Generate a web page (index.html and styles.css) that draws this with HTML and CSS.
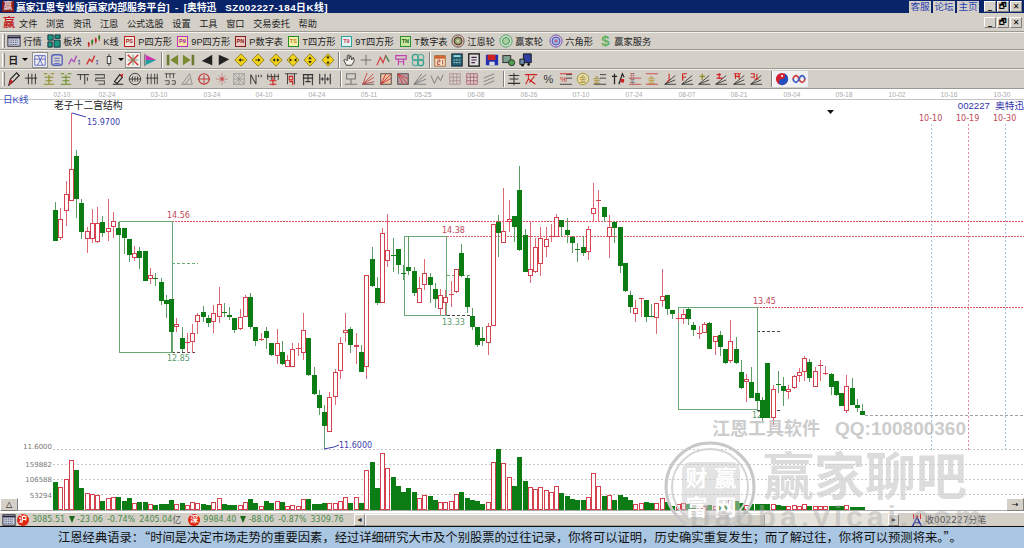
FILE: index.html
```html
<!DOCTYPE html>
<html lang="zh-CN">
<head>
    <meta charset="UTF-8">
    <title>赢家江恩专业版 - 奥特迅 日K线</title>
    <link rel="stylesheet" href="styles.css">
</head>
<body>
<svg class="defs" width="0" height="0">
    <symbol id="dia" viewBox="0 0 16 16"><path d="M8 1 15 8 8 15 1 8Z" fill="#f2d21a" stroke="#8a7a10"/></symbol>
    <symbol id="fan" viewBox="0 0 16 16"><path d="M2 14 14 2M2 14 15 6M2 14 15 11M2 14 7 1" fill="none" stroke="#c84040"/><path d="M2 14H15" stroke="#555"/></symbol>
    <symbol id="slant" viewBox="0 0 16 16"><path d="M2 14 14 4M2 14 14 9M2 14H15" fill="none" stroke="#333"/></symbol>
</svg>

<div class="titlebar">
    <span class="app-logo">赢</span>
    <span class="title-text">赢家江恩专业版[赢家内部服务平台]&nbsp;&nbsp;-&nbsp;&nbsp;[奥特迅<span class="title-code">SZ002227-184日K线]</span></span>
    <div class="title-links">
        <a>客服</a><a>论坛</a><a>主页</a>
    </div>
    <div class="win-btns">
        <button class="win-btn">_</button><button class="win-btn">🗗</button><button class="win-btn">✕</button>
    </div>
</div>

<div class="menubar">
    <span class="menu-logo">赢</span>
    <nav class="menu">
        <span>文件</span><span>浏览</span><span>资讯</span><span>江恩</span><span>公式选股</span><span>设置</span><span>工具</span><span>窗口</span><span>交易委托</span><span>帮助</span>
    </nav>
    <div class="win-btns">
        <button class="win-btn">_</button><button class="win-btn">🗗</button><button class="win-btn">✕</button>
    </div>
</div>

<div class="toolbar tb-main">
    <i class="grip"></i>
    <span class="tb-item w-hq"><svg class="ic" viewBox="0 0 16 16"><rect x="1" y="2" width="14" height="12" fill="#c8cce0" stroke="#223"/><path d="M1 4H15" stroke="#223" stroke-width="2"/><path d="M3 7H13M3 9.500H13M3 12H13" stroke="#334" stroke-dasharray="1 1"/></svg>行情</span>
    <span class="tb-item w-bk"><svg class="ic" viewBox="0 0 16 16"><path d="M1 1H7V7H1ZM9 1H15V5H9ZM1 9H6V15H1ZM8 7H15V15H8Z" fill="#1a9a80" stroke="#123"/></svg>板块</span>
    <span class="tb-item w-k"><svg class="ic" viewBox="0 0 16 16"><path d="M2 9V15M6 6V13M10 4V11M14 1V8" stroke="#c02020"/><path d="M1 10H3V13H1ZM9 5H11V9H9Z" fill="#c02020"/><path d="M5 7H7V11H5ZM13 2H15V6H13Z" fill="#1a8a1a"/></svg>K线</span>
    <span class="tb-item w-p"><b class="box-ic c-red">PS</b>P四方形</span>
    <span class="tb-item w-9p"><b class="box-ic c-mag">P9</b>9P四方形</span>
    <span class="tb-item w-pn"><b class="box-ic c-dred">PN</b>P数字表</span>
    <span class="tb-item w-p"><b class="box-ic c-grn">TS</b>T四方形</span>
    <span class="tb-item w-9t"><b class="box-ic c-teal">T9</b>9T四方形</span>
    <span class="tb-item w-pn"><b class="box-ic c-lgrn">TN</b>T数字表</span>
    <span class="tb-item w-wheel"><svg class="ic" viewBox="0 0 16 16"><circle cx="8" cy="8" r="7" fill="#e8b0a0" stroke="#555"/><circle cx="8" cy="8" r="4.500" fill="#8a9a60" stroke="#333"/><circle cx="8" cy="8" r="2" fill="#d0d0b0"/></svg>江恩轮</span>
    <span class="tb-item w-wheel2"><svg class="ic" viewBox="0 0 16 16"><circle cx="8" cy="8" r="7" fill="#c8e0c0" stroke="#4a9a6a"/><circle cx="8" cy="8" r="4" fill="#a8d0a0" stroke="#3a8a5a"/></svg>赢家轮</span>
    <span class="tb-item w-hex"><svg class="ic" viewBox="0 0 16 16"><circle cx="8" cy="8" r="7" fill="#e0b8d8" stroke="#5a5ab0"/><circle cx="8" cy="8" r="4.500" fill="#9ac0e8" stroke="#4040a0"/><circle cx="8" cy="8" r="2" fill="#c06090"/></svg>六角形</span>
    <span class="tb-item"><b class="dollar">$</b>赢家服务</span>
</div>

<div class="toolbar tb-two">
    <i class="grip"></i>
    <span class="day-pick">日</span><span class="caret"></span>
    <span class="slot active first"><svg class="ic" viewBox="0 0 16 16"><path d="M2 3H14V14H2ZM2 7H14M6 3 11 14M11 3 5 14" stroke="#5060c0"/></svg></span>
    <span class="slot"><svg class="ic" viewBox="0 0 16 16"><rect x="2" y="2" width="12" height="12" rx="3" stroke="#5060c0" stroke-width="1.500"/><path d="M5 6H11M5 9H11M5 12H11" stroke="#5060c0"/></svg></span>
    <span class="slot"><svg class="ic" viewBox="0 0 16 16"><path d="M2 13 5 7 8 10 11 3" stroke="#b050c0" stroke-width="1.500"/><path d="M13 9H15M13 12H15" stroke="#6060a0" stroke-width="2"/></svg></span>
    <span class="slot"><svg class="ic" viewBox="0 0 16 16"><path d="M2 13 5 7 8 10 11 3" stroke="#d03030" stroke-width="1.500"/><path d="M13 9H15M13 12H15" stroke="#6060a0" stroke-width="2"/></svg></span>
    <span class="slot"><svg class="ic" viewBox="0 0 16 16"><path d="M8 1V15" stroke="#333"/><rect x="6" y="4" width="4" height="8" fill="#eee" stroke="#333"/></svg></span>
    <span class="caret solo"></span>
    <span class="slot active"><svg class="ic" viewBox="0 0 16 16"><path d="M2 2 14 14M14 2 2 14" stroke="#d04040" stroke-width="2"/><path d="M8 2V14M2 8H14" stroke="#609060"/></svg></span>
    <span class="slot"><svg class="ic" viewBox="0 0 16 16"><path d="M2 1V15" stroke="#555"/><path d="M3 2 15 8H3Z" fill="#d030b0"/><path d="M3 8H15L3 14Z" fill="#20a0a0"/></svg></span>
    <i class="sep sep-a"></i>
    <span class="slot"><svg class="ic" viewBox="0 0 16 16"><path d="M2 2H5V14H2Z" fill="#6a7a30"/><path d="M15 2V14L6 8Z" fill="#7a8a30"/></svg></span>
    <span class="slot"><svg class="ic" viewBox="0 0 16 16"><path d="M11 2H14V14H11Z" fill="#6a7a30"/><path d="M1 2V14L10 8Z" fill="#7a8a30"/></svg></span>
    <span class="slot"><svg class="ic" viewBox="0 0 16 16"><path d="M14 2V14L2 9Z" fill="#222"/></svg></span>
    <span class="slot"><svg class="ic" viewBox="0 0 16 16"><path d="M2 2V14L14 7Z" fill="#222"/></svg></span>
    <span class="slot"><svg class="ic" viewBox="0 0 16 16"><use href="#dia"/><path d="M5 8 8 6V10Z" fill="#222"/><path d="M8 8H11" stroke="#222"/></svg></span>
    <span class="slot"><svg class="ic" viewBox="0 0 16 16"><use href="#dia"/><path d="M11 8 8 6V10Z" fill="#222"/><path d="M5 8H8" stroke="#222"/></svg></span>
    <span class="slot"><svg class="ic" viewBox="0 0 16 16"><use href="#dia"/><path d="M4 8 7 6V10ZM12 8 9 6V10Z" fill="#222"/></svg></span>
    <span class="slot"><svg class="ic" viewBox="0 0 16 16"><use href="#dia"/><path d="M7 8 4 6V10ZM9 8 12 6V10Z" fill="#222"/></svg></span>
    <span class="slot"><svg class="ic" viewBox="0 0 16 16"><use href="#dia"/><path d="M8 4 6 7H10ZM8 12 6 9H10Z" fill="#222"/></svg></span>
    <span class="slot"><svg class="ic" viewBox="0 0 16 16"><use href="#dia"/><path d="M8 7 6 4H10ZM8 9 6 12H10Z" fill="#222"/></svg></span>
    <i class="sep sep-b"></i>
    <span class="slot"><svg class="ic" viewBox="0 0 16 16"><path d="M5 14 2 8 4 7 6 9V3L8 2V7L10 3 11 8 13 5 14 9 11 14Z" fill="#f4f0e8" stroke="#333"/></svg></span>
    <span class="slot"><svg class="ic" viewBox="0 0 16 16"><path d="M8 2V14M2 8H14" stroke="#666"/></svg></span>
    <span class="slot"><svg class="ic" viewBox="0 0 16 16"><path d="M1 14 5 5 8 11 11 3 15 10" stroke="#d04040" stroke-width="1.400"/><path d="M11 3 15 10" stroke="#30a060" stroke-width="1.400"/></svg></span>
    <span class="slot"><svg class="ic" viewBox="0 0 16 16"><path d="M2 3H14V7H2ZM5 7V14M11 7V14M5 10H11" stroke="#c040b0" stroke-width="1.300"/></svg></span>
    <span class="slot"><svg class="ic" viewBox="0 0 16 16"><circle cx="5" cy="5" r="3.500" stroke="#30a090" stroke-width="1.400"/><circle cx="11" cy="5" r="3.500" stroke="#60b0a0" stroke-width="1.400"/><circle cx="5" cy="11" r="3.500" stroke="#60b0a0" stroke-width="1.400"/><circle cx="11" cy="11" r="3.500" stroke="#30a090" stroke-width="1.400"/></svg></span>
    <i class="sep sep-c"></i>
    <span class="slot"><svg class="ic" viewBox="0 0 16 16"><rect x="2" y="3" width="12" height="12" fill="#f8e0c0" stroke="#a06030"/><path d="M2 5H14" stroke="#d06030" stroke-width="3"/><path d="M5 8H8V10H5V13H8M11 8V13" stroke="#a04040"/></svg></span>
    <span class="slot"><svg class="ic" viewBox="0 0 16 16"><rect x="2" y="1" width="12" height="14" fill="#206070" stroke="#123"/><path d="M4 3.500H12" stroke="#a0e0e0" stroke-width="2"/><path d="M4 8H12M4 11H12" stroke="#d0e0e0" stroke-dasharray="2 1"/></svg></span>
    <span class="slot"><svg class="ic" viewBox="0 0 16 16"><rect x="2" y="1" width="12" height="14" fill="#ddd" stroke="#222" stroke-width="1.600"/><path d="M5 5H11M5 8H11M5 11H9" stroke="#402040" stroke-width="1.300"/></svg></span>
    <span class="slot"><svg class="ic" viewBox="0 0 16 16"><rect x="1" y="2" width="14" height="12" fill="#2030b0"/><rect x="3" y="2" width="9" height="6" fill="#d02020"/><rect x="5" y="10" width="6" height="4" fill="#ddd"/></svg></span>
    <span class="slot"><svg class="ic" viewBox="0 0 16 16"><rect x="1" y="3" width="9" height="8" fill="#80a090" stroke="#222"/><circle cx="11" cy="11" r="3.500" fill="#50a050" stroke="#222"/></svg></span>
    <span class="slot"><svg class="ic" viewBox="0 0 16 16"><path d="M5 1H14V11H5Z" fill="#3040a0" stroke="#111"/><path d="M1 7H6V13H1Z" fill="#7090b0" stroke="#111"/><circle cx="4" cy="14" r="1.500" fill="#111"/><circle cx="11" cy="13" r="1.500" fill="#111"/></svg></span>
</div>

<div class="toolbar tb-three">
    <i class="grip"></i>
    <span class="slot"><svg class="ic" viewBox="0 0 16 16"><path d="M2 15 4 8 11 1 14 4 7 11Z" stroke="#222" stroke-width="1.300"/><path d="M2 15 4 8 7 11Z" fill="#d02020"/></svg></span>
    <span class="slot"><svg class="ic" viewBox="0 0 16 16"><path d="M5 2V14M9 2V14M13 2V14M1 7H15" stroke="#222"/></svg></span>
    <span class="slot"><svg class="ic" viewBox="0 0 16 16"><path d="M2 2H6M10 2H14M3 6H13M8 3V14M4 10H12M2 14H14" stroke="#8a8a20" stroke-width="1.200"/></svg></span>
    <span class="slot"><svg class="ic" viewBox="0 0 16 16"><path d="M2 2H6M10 2H14M3 6H13M8 3V14M4 10H12M2 14H14" stroke="#6a8a20" stroke-width="1.200"/></svg></span>
    <span class="slot"><svg class="ic" viewBox="0 0 16 16"><path d="M1 3H15M5 3V9M10 3V14M13 6V10" stroke="#222"/></svg></span>
    <span class="slot"><svg class="ic" viewBox="0 0 16 16"><path d="M2 3H13V7H3M3 7V10H13V14H6" stroke="#555" stroke-width="1.200"/></svg></span>
    <span class="slot"><svg class="ic" viewBox="0 0 16 16"><path d="M2 14H14M4 11 10 3 13 6 7 13Z" stroke="#222" stroke-width="1.300"/><path d="M10 3 13 6 14 2Z" fill="#d02020"/></svg></span>
    <span class="slot"><svg class="ic" viewBox="0 0 16 16"><circle cx="8" cy="8" r="6.500" stroke="#333"/><path d="M1 8H15M5 5V11M8 5V11M11 5V11" stroke="#333"/></svg></span>
    <span class="slot"><svg class="ic" viewBox="0 0 16 16"><path d="M3 2V14M7 2V14M11 2V14M14 2V14M1 7H15" stroke="#333"/></svg></span>
    <span class="slot"><svg class="ic" viewBox="0 0 16 16"><path d="M2 2H14M4 2V7M8 2V7M12 2V7M2 10H7V14H3M10 10H14V14H10" stroke="#444"/></svg></span>
    <span class="slot"><svg class="ic" viewBox="0 0 16 16"><path d="M2 14 11 2 14 14ZM6 14 11 7" stroke="#888"/></svg></span>
    <span class="slot"><svg class="ic" viewBox="0 0 16 16"><circle cx="8" cy="8" r="6" stroke="#c03030" stroke-width="1.300"/><path d="M1 8H15M8 3V14" stroke="#c03030"/></svg></span>
    <span class="slot"><svg class="ic" viewBox="0 0 16 16"><path d="M1 8H15M8 1V15M4 4 12 12M12 4 4 12" stroke="#c08080"/><circle cx="8" cy="8" r="2" fill="#d05050"/></svg></span>
    <span class="slot"><svg class="ic" viewBox="0 0 16 16"><rect x="2" y="2" width="12" height="12" stroke="#999"/><path d="M2 2 14 14M14 2 2 14M8 2V14M2 8H14" stroke="#999"/></svg></span>
    <span class="slot"><svg class="ic" viewBox="0 0 16 16"><path d="M2 14V3L8 14V3M11 3V6M14 3V6" stroke="#444" stroke-width="1.200"/></svg></span>
    <span class="slot"><svg class="ic" viewBox="0 0 16 16"><path d="M2 2V9M6 2V9M10 2V9M14 2V9M1 5H15" stroke="#333"/><path d="M8 5V15M4 10H12M4 14H12" stroke="#d02020" stroke-width="1.300"/></svg></span>
    <span class="slot"><svg class="ic" viewBox="0 0 16 16"><path d="M1 2H15M4 2V14M12 2V14" stroke="#333"/><path d="M6 5H10V9H6ZM6 11H10V15" stroke="#d02020" stroke-width="1.300"/></svg></span>
    <span class="slot"><svg class="ic" viewBox="0 0 16 16"><path d="M2 3H14M2 7H14M3 3V15M8 3V11M13 3V15M5 11H11" stroke="#333" stroke-width="1.200"/></svg></span>
    <span class="slot"><svg class="ic" viewBox="0 0 16 16"><path d="M2 2V14M14 2V14M8 2V14M3 8H7M9 8H13" stroke="#333" stroke-width="1.200"/><path d="M5 6V10M11 6V10" stroke="#333"/></svg></span>
    <i class="sep sep-d"></i>
    <span class="slot"><svg class="ic" viewBox="0 0 16 16"><path d="M3 2H13V8H3ZM8 8V14M1 14H15" stroke="#777" stroke-width="1.300"/></svg></span>
    <span class="slot"><svg class="ic" viewBox="0 0 16 16"><use href="#fan"/></svg></span>
    <span class="slot"><svg class="ic" viewBox="0 0 16 16"><rect x="2" y="2" width="12" height="12" fill="#eec0a0" stroke="#444"/><path d="M2 14 14 2M2 14 14 7M2 14 8 2" stroke="#c03030"/></svg></span>
    <span class="slot"><svg class="ic" viewBox="0 0 16 16"><rect x="2" y="2" width="12" height="12" fill="#b89aa0" stroke="#444"/><path d="M2 2 14 14M2 2 14 8M2 2 8 14" stroke="#d04040"/></svg></span>
    <span class="slot"><svg class="ic" viewBox="0 0 16 16"><path d="M1 14 15 3M1 14 15 8M1 14 10 2M1 14H15" stroke="#777"/></svg></span>
    <span class="slot"><svg class="ic" viewBox="0 0 16 16"><path d="M1 4 5 13 9 5 12 10 15 3" stroke="#777"/></svg></span>
    <span class="slot"><svg class="ic" viewBox="0 0 16 16"><path d="M2 2H14V14H2ZM2 6H14M2 10H14M6 2V14M10 2V14" stroke="#b09090"/></svg></span>
    <span class="slot"><svg class="ic" viewBox="0 0 16 16"><path d="M2 2H14V14H2ZM2 6H14M2 10H14M6 2V14M10 2V14" stroke="#b06070"/></svg></span>
    <span class="slot"><svg class="ic" viewBox="0 0 16 16"><path d="M2 7 14 2M2 11 14 6M2 15 14 10" stroke="#777"/></svg></span>
    <i class="sep sep-e"></i>
    <span class="slot"><svg class="ic" viewBox="0 0 16 16"><path d="M8 1V15M2 4H14M3 8H13M1 13H15" stroke="#333" stroke-width="1.200"/></svg></span>
    <span class="slot"><svg class="ic" viewBox="0 0 16 16"><path d="M1 3H15M5 3V8L2 14M5 8 13 14M12 5 6 12" stroke="#d02020" stroke-width="1.200"/></svg></span>
    <span class="slot pct">%</span>
    <span class="slot"><svg class="ic" viewBox="0 0 16 16"><path d="M8 3H15M8 7H15M1 14H15" stroke="#333"/><text x="1" y="11" class="ic-txt" fill="#d02020">%</text><path d="M1 2H15" stroke="#d02020"/></svg></span>
    <span class="slot"><svg class="ic" viewBox="0 0 16 16"><circle cx="8" cy="8" r="6.500" fill="#ede2b0" stroke="#9a9030"/><text x="3.500" y="11" class="ic-txt" fill="#9a8020">金</text></svg></span>
    <span class="slot"><svg class="ic" viewBox="0 0 16 16"><path d="M8 3H15M8 7H15M1 14H15" stroke="#333"/><text x="0" y="12" class="ic-txt" fill="#9a8020">金</text></svg></span>
    <span class="slot"><svg class="ic" viewBox="0 0 16 16"><path d="M4 2V14M1 5H7M9 14 13 2 15 6" stroke="#222" stroke-width="1.400"/><path d="M11 8H15V12H11Z" fill="#d02020"/></svg></span>
    <span class="slot"><svg class="ic" viewBox="0 0 16 16"><path d="M1 7H15M1 14H15" stroke="#d04040"/><text x="2" y="6.500" class="ic-txt sm" fill="#a04040">开</text><text x="2" y="13.500" class="ic-txt sm" fill="#555">平</text></svg></span>
    <span class="slot"><svg class="ic" viewBox="0 0 16 16"><path d="M1 2H15M1 14H15" stroke="#d04040"/><text x="3" y="12" class="ic-txt" fill="#b09020">金</text></svg></span>
    <span class="slot"><svg class="ic" viewBox="0 0 16 16"><use href="#slant"/><path d="M7 2V9L4 12" stroke="#d02020" stroke-width="1.200"/></svg></span>
    <span class="slot"><svg class="ic" viewBox="0 0 16 16"><use href="#slant"/><path d="M3 2H8M3 2V10M3 6H7" stroke="#d02020" stroke-width="1.300"/></svg></span>
    <span class="slot"><svg class="ic" viewBox="0 0 16 16"><use href="#slant"/><path d="M6 2V9M3 5H9" stroke="#8a8a20" stroke-width="1.300"/></svg></span>
    <span class="slot"><svg class="ic" viewBox="0 0 16 16"><use href="#slant"/><path d="M3 3H8M6 1V8M3 7H10" stroke="#d02020" stroke-width="1.200"/></svg></span>
    <span class="slot"><svg class="ic" viewBox="0 0 16 16"><use href="#slant"/><path d="M2 2H10M4 2V8M8 2V8M3 5H9" stroke="#d02020" stroke-width="1.200"/></svg></span>
    <span class="slot"><svg class="ic" viewBox="0 0 16 16"><use href="#slant"/><path d="M2 2H6V6H2M9 2V8M6 8H11" stroke="#d02020" stroke-width="1.200"/></svg></span>
    <i class="sep sep-f"></i>
    <span class="slot lit"><svg class="ic" viewBox="0 0 16 16"><circle cx="8" cy="8" r="7" fill="#d02030"/><path d="M8 1A7 7 0 0 1 8 15 3.500 3.500 0 0 1 8 8 3.500 3.500 0 0 0 8 1Z" fill="#2050c0"/><circle cx="8" cy="4.500" r="1.200" fill="#fff"/></svg></span>
    <span class="slot lit"><svg class="ic" viewBox="0 0 16 16"><path d="M1 8C3 3 6 3 8 8S13 13 15 8" stroke="#d04040" stroke-width="2"/><path d="M1 8C3 13 6 13 8 8S13 3 15 8" stroke="#4060c0" stroke-width="2"/></svg></span>
</div>

<main class="chart">
    <svg id="chart-svg" class="chart-svg" viewBox="0 89 1024 424">
        <g id="axis"></g>
        <g id="levels"></g>
        <g id="candles"></g>
        <g id="volumes"></g>
        <g id="labels"></g>
    </svg>
    <span class="chart-name">日K线</span>
    <span class="chart-title">老子十二宫结构</span>
    <span class="chart-code">002227&nbsp;&nbsp;奥特迅</span>
    <button class="corner-btn left">△</button>
    <button class="corner-btn right">→</button>
</main>

<footer class="statusbar">
    <div class="index-box">
        <svg class="ic calc" viewBox="0 0 16 16"><rect x="1" y="2" width="14" height="12" fill="#c8cce0" stroke="#223"/><path d="M1 4H15" stroke="#223" stroke-width="2"/><path d="M3 7H13M3 9.500H13M3 12H13" stroke="#334" stroke-dasharray="1 1"/></svg>
        <b class="stamp">沪</b>
        <span>3085.51</span><i class="down"></i><span class="tight">-23.06</span><span>-0.74%</span><span>2405.04</span><em class="unit">亿</em>
        <b class="stamp">深</b>
        <span>9984.40</span><i class="down"></i><span class="tight">-88.06</span><span>-0.87%</span><span>3309.76</span>
    </div>
    <div class="scroll">
        <span class="scroll-btn">◂</span>
        <span class="scroll-thumb"></span>
        <span class="scroll-track"></span>
        <span class="scroll-btn">▸</span>
    </div>
    <div class="tick-box">
        <svg class="ic tower" viewBox="0 0 16 16"><path d="M8 5 3 15M8 5 13 15M5 11H11" stroke="#2030a0" stroke-width="1.500"/><circle cx="8" cy="4" r="1.500" fill="#d02020"/><path d="M4 1V7M12 1V7" stroke="#d02020"/></svg>
        <span>收002227分笔</span>
    </div>
</footer>

<div class="quote">江恩经典语录：“时间是决定市场走势的重要因素，经过详细研究大市及个别股票的过往记录，你将可以证明，历史确实重复发生；而了解过往，你将可以预测将来。”。</div>

<div class="watermark">
    <svg class="wm-ring" viewBox="0 0 92 92">
        <circle cx="46" cy="46" r="44" fill="none" stroke="#c8c8c8" stroke-width="3"/>
        <circle cx="46" cy="46" r="38" fill="none" stroke="#d4d4d4" stroke-width="2"/>
    </svg>
    <div class="wm-seal"><span>财</span><span>赢</span><span>富</span><span>网</span></div>
    <div class="wm-line"><span>江恩工具软件</span><span class="wm-qq">QQ:100800360</span></div>
    <div class="wm-big">赢家聊吧</div>
    <div class="wm-url">jiaoba.yicai.com</div>
</div>

<script src="chart.js"></script>
</body>
</html>
```

FILE: styles.css
```css
* {
    margin: 0;
    padding: 0;
    box-sizing: border-box;
}

html, body {
    width: 1024px;
    height: 548px;
    overflow: hidden;
}

body {
    position: relative;
    display: flex;
    flex-direction: column;
    background: #d4d0c8;
    color: #222;
    font-family: "Liberation Sans", "Noto Sans CJK SC", sans-serif;
    font-size: 9.2px;
}

.defs {
    position: absolute;
}

.ic {
    width: 14px;
    height: 14px;
    fill: none;
    flex: none;
}

.ic-txt {
    font-size: 9px;
    stroke: none;
}

.ic-txt.sm {
    font-size: 6px;
}

/* title bar */
.titlebar {
    height: 14px;
    flex: none;
    display: flex;
    align-items: center;
    background: #0a246a;
    color: #fff;
    border-bottom: 1px solid #d4d0c8;
}

.app-logo {
    width: 12px;
    height: 11px;
    margin: 0 2px 0 2px;
    background: #8a1c1c;
    color: #fff;
    font-size: 9px;
    line-height: 11px;
    text-align: center;
}

.title-text {
    font-size: 9.8px;
    font-weight: 700;
    white-space: nowrap;
}

.title-code {
    margin-left: 9px;
    letter-spacing: 0.500px;
}

.title-links {
    display: flex;
    gap: 2px;
    margin-left: auto;
    margin-right: 5px;
}

.title-links a {
    width: 22px;
    height: 12px;
    background: #d4d0c8;
    color: #2a3fb0;
    font-size: 9.6px;
    line-height: 12px;
    text-align: center;
}

.win-btns {
    display: flex;
    gap: 1px;
    margin-right: 2px;
}

.win-btn {
    width: 12px;
    height: 11px;
    border: 1px solid #808080;
    border-top-color: #fff;
    border-left-color: #fff;
    background: #d4d0c8;
    color: #000;
    font-family: "DejaVu Sans", sans-serif;
    font-size: 8px;
    font-weight: 700;
    line-height: 8px;
}

/* menu */
.menubar {
    height: 18px;
    flex: none;
    display: flex;
    align-items: center;
    border-bottom: 1px solid #9a9a94;
}

.menu-logo {
    width: 12px;
    margin: 0 4px 0 3px;
    color: #c02020;
    font-size: 12px;
    font-weight: 700;
    line-height: 14px;
}

.menu {
    display: flex;
    gap: 8.600px;
    font-size: 9.2px;
}

.menubar .win-btns {
    margin-left: auto;
}

/* toolbars */
.toolbar {
    flex: none;
    display: flex;
    align-items: center;
    border-top: 1px solid #f4f2ec;
    border-bottom: 1px solid #9a9a94;
    white-space: nowrap;
}

.tb-main {
    height: 18px;
}

.tb-two {
    height: 19px;
}

.tb-three {
    height: 20px;
}

.grip {
    width: 3px;
    height: 14px;
    margin-left: 2px;
    margin-right: 0.350px;
    border-left: 1px solid #fff;
    border-right: 1px solid #808080;
}

.tb-item {
    display: flex;
    align-items: center;
    gap: 2px;
    margin-right: 6px;
}

.w-hq { width: 34px; margin-left: 2px; }
.w-bk { width: 34px; }
.w-k { width: 29px; }
.w-p { width: 47px; }
.w-9p { width: 52px; }
.w-pn { width: 47px; }
.w-9t { width: 53px; }
.w-wheel { width: 42px; }
.w-wheel2 { width: 44px; }
.w-hex { width: 43px; }

.box-ic {
    width: 11px;
    height: 11px;
    flex: none;
    margin: 0 1.500px;
    border: 1px solid;
    font-size: 5.500px;
    line-height: 9px;
    text-align: center;
    background: #f0e8e0;
}

.c-red { border-color: #c02020; color: #a01818; }
.c-mag { border-color: #c030c0; color: #a020a0; background: #f4e4a0; }
.c-dred { border-color: #802020; color: #802020; background: #f0c8c0; }
.c-grn { border-color: #209020; color: #c08020; background: #f4f0b0; }
.c-teal { border-color: #30a0a0; color: #d04060; background: #e0f4f0; }
.c-lgrn { border-color: #309030; color: #206020; background: #c8e8a0; }

.dollar {
    width: 14px;
    color: #60b060;
    font-size: 15px;
    line-height: 14px;
    text-align: center;
}

.day-pick {
    width: 16px;
    font-size: 10px;
    font-weight: 700;
    text-align: center;
}

.caret {
    width: 0;
    height: 0;
    margin: 0 3.650px 0 1px;
    border: 3px solid transparent;
    border-top: 3px solid #000;
    border-bottom: 0;
}

.caret.solo {
    margin: 0 0.850px 0 0;
}

.slot {
    width: 17.300px;
    height: 16px;
    flex: none;
    display: flex;
    align-items: center;
    justify-content: center;
}

.slot.first {
    width: 16px;
}

.slot.active {
    width: 16px;
    border: 1px solid #909090;
    background: #f2f0ec;
}

.slot.active.first {
    margin-right: 0.350px;
}

.slot.active:not(.first) {
    margin: 0 0.650px;
}

.slot.lit {
    background: #eef0f4;
}

.pct {
    font-size: 11px;
    color: #333;
}

.sep {
    height: 16px;
    flex: none;
    border-right: 1px solid #fff;
    box-shadow: inset -1px 0 0 #808080;
}

.sep-a { width: 4.350px; }
.sep-b { width: 4px; }
.sep-c { width: 4.500px; }
.sep-d { width: 8.300px; }
.sep-e { width: 7.300px; }
.sep-f { width: 8.500px; }

/* chart */
.chart {
    position: relative;
    height: 424px;
    flex: none;
    background: #fff;
    overflow: hidden;
}

.chart-svg {
    display: block;
    width: 1024px;
    height: 424px;
}

.chart-svg text {
    font-family: "DejaVu Sans", sans-serif;
    font-size: 8px;
}

.chart-svg .date {
    fill: #aaa;
    font-family: "Liberation Sans", sans-serif;
    font-size: 6.600px;
    text-anchor: middle;
}

.chart-svg .hi {
    fill: #c04858;
}

.chart-svg .lo {
    fill: #5a9a70;
}

.chart-svg .peak {
    fill: #3c3cb0;
}

.chart-svg .scale {
    fill: #777;
    font-size: 7px;
    text-anchor: end;
}

.chart-name,
.chart-title,
.chart-code {
    position: absolute;
    white-space: nowrap;
}

.chart-name {
    left: 3px;
    top: 3px;
    color: #3a4fc0;
    font-size: 9.600px;
}

.chart-title {
    left: 54px;
    top: 9px;
    color: #222;
    font-size: 9.800px;
}

.chart-code {
    right: 0;
    top: 9px;
    color: #3333aa;
    font-size: 9.600px;
}

.corner-btn {
    position: absolute;
    bottom: 2px;
    width: 18px;
    height: 13px;
    border: 1px solid #808080;
    border-top-color: #fff;
    border-left-color: #fff;
    background: #d4d0c8;
    font-family: "DejaVu Sans", sans-serif;
    font-size: 8px;
    line-height: 9px;
}

.corner-btn.left {
    left: 0;
}

.corner-btn.right {
    right: 0;
}

/* status */
.statusbar {
    height: 14px;
    flex: none;
    display: flex;
    align-items: center;
    border-bottom: 1px solid #111;
    font-family: "DejaVu Sans", "Noto Sans CJK SC", sans-serif;
    font-size: 8px;
}

.index-box {
    width: 353px;
    flex: none;
    display: flex;
    align-items: center;
    gap: 4px;
    padding-left: 2px;
    overflow: hidden;
    color: #4a8a4a;
    white-space: nowrap;
}

.index-box .calc {
    margin-right: -3px;
}

.stamp {
    width: 12px;
    height: 12px;
    flex: none;
    margin-right: -1px;
    border-radius: 50%;
    background: #e02810;
    color: #fff;
    font-size: 8px;
    line-height: 12px;
    text-align: center;
}

.down {
    width: 0;
    height: 0;
    margin-right: -2px;
    border: 3.500px solid transparent;
    border-top: 7px solid #1a6a1a;
    border-bottom: 0;
}

.unit {
    margin-left: -4px;
    margin-right: 3px;
    color: #555;
    font-size: 9px;
    font-style: normal;
}

.scroll {
    width: 545px;
    height: 13px;
    flex: none;
    margin-left: 1px;
    display: flex;
    align-items: center;
    background: #e6e3dc;
}

.scroll-btn {
    width: 11px;
    height: 12px;
    flex: none;
    border: 1px solid #808080;
    border-top-color: #fff;
    border-left-color: #fff;
    background: #d4d0c8;
    font-size: 8px;
    line-height: 10px;
    text-align: center;
}

.scroll-thumb {
    width: 400px;
    height: 12px;
    flex: none;
    border: 1px solid #a0a0a0;
    border-top-color: #fff;
    border-left-color: #fff;
    background: #d4d0c8;
}

.scroll-track {
    flex: 1;
}

.tick-box {
    display: flex;
    align-items: center;
    gap: 1px;
    margin-left: 11px;
    color: #555;
    font-size: 9px;
    white-space: nowrap;
}

.quote {
    position: relative;
    z-index: 2;
    height: 22px;
    flex: none;
    padding-left: 58px;
    background: #a9c6e2;
    color: #111;
    font-family: "Noto Sans CJK SC", sans-serif;
    font-size: 12.300px;
    line-height: 21px;
    white-space: nowrap;
}

/* watermark over the chart */
.watermark {
    position: absolute;
    left: 0;
    top: 0;
    width: 1024px;
    height: 526px;
    overflow: hidden;
    pointer-events: none;
}

.wm-ring {
    position: absolute;
    left: 664px;
    top: 441px;
    width: 92px;
    height: 92px;
}

.wm-seal {
    position: absolute;
    left: 682px;
    top: 462px;
    width: 58px;
    height: 58px;
    display: grid;
    grid-template-columns: 1fr 1fr;
    border-radius: 8px;
    background: rgba(200, 200, 200, 0.5);
    color: #fff;
    font-family: "Noto Sans CJK SC", sans-serif;
    font-size: 22px;
    font-weight: 700;
    line-height: 29px;
    text-align: center;
}

.wm-line {
    position: absolute;
    left: 712px;
    top: 416px;
    display: flex;
    gap: 15px;
    color: rgba(190, 190, 190, 0.8);
    font-size: 18px;
    font-weight: 700;
    line-height: 26px;
    white-space: nowrap;
}

.wm-qq {
    font-size: 19px;
}

.wm-big {
    position: absolute;
    left: 763px;
    top: 436px;
    color: rgba(205, 205, 205, 0.7);
    font-family: "Noto Sans CJK SC", sans-serif;
    font-size: 51px;
    font-weight: 700;
    line-height: 74px;
    white-space: nowrap;
}

.wm-url {
    position: absolute;
    left: 690px;
    top: 502px;
    color: rgba(170, 170, 170, 0.45);
    font-size: 30px;
    font-weight: 700;
    line-height: 30px;
    letter-spacing: 4px;
    white-space: nowrap;
}
```

FILE: chart.js
```js
const NS = 'http://www.w3.org/2000/svg';

function add(groupId, tag, attrs, text) {
    const el = document.createElementNS(NS, tag);
    for (const k in attrs) el.setAttribute(k, attrs[k]);
    if (text) el.textContent = text;
    document.getElementById(groupId).appendChild(el);
}

function line(groupId, x1, y1, x2, y2, stroke, dash) {
    const attrs = { x1, y1, x2, y2, stroke };
    if (dash) attrs['stroke-dasharray'] = dash;
    add(groupId, 'line', attrs);
}

const GREEN = '#0c7c14';
const GREEN_WICK = '#5c9c64';
const RED = '#d4404e';
const RED_WICK = '#dc6a74';

// type, wick top, wick bottom, body top, body bottom (page pixels, read off the chart)
const candles = [
    'g 202 241 210 241', 'r 208 240 219 238', 'r 181 226 194 211', 'r 113 201 169 201', 'g 150 218 156 199',
    'g 199 239 203 232', 'r 227 253 231 239', 'r 209 243 223 239', 'r 207 243 223 242', 'g 216 237 222 233',
    'r 199 241 228 232', 'r 212 238 221 227', 'g 222 235 228 235', 'g 228 254 228 238', 'g 239 262 239 255',
    'r 246 261 253 258', 'g 247 269 251 258', 'g 251 281 251 281', 'r 268 284 275 279', 'g 273 286 278 278',
    'g 278 305 282 301', 'g 295 318 300 304', 'g 299 352 299 332', 'r 318 332 324 327', 'g 327 352 338 349',
    'r 333 353 342 342', 'r 324 353 333 342', 'r 313 334 315 322', 'g 306 322 312 317', 'g 315 327 318 323',
    'r 305 333 313 322', 'r 287 323 304 317', 'g 303 317 312 312', 'g 307 320 315 317', 'g 318 333 318 330',
    'r 309 330 317 329', 'r 295 317 297 317', 'g 293 329 297 327', 'g 327 346 327 341', 'r 333 341 339 339',
    'g 327 349 331 338', 'g 343 356 343 355', 'r 329 364 343 356', 'g 341 365 352 364', 'r 355 367 360 367',
    'r 343 367 349 367', 'r 343 356 348 348', 'r 313 360 330 353', 'g 338 376 338 375', 'g 367 395 375 394',
    'g 390 415 395 408', 'g 405 449 412 426', 'r 392 432 397 432', 'r 369 405 372 397', 'r 337 379 343 371',
    'r 313 342 330 333', 'g 327 353 329 345', 'r 333 364 345 347', 'g 345 372 352 372', 'r 275 379 275 367',
    'g 247 287 259 286', 'g 277 305 288 303', 'r 228 303 233 303', 'r 214 267 250 261', 'g 238 272 255 255',
    'g 249 274 249 265', 'g 265 280 273 273', 'g 236 275 267 271', 'g 267 296 271 293', 'r 277 303 288 303',
    'r 259 290 273 285', 'g 273 303 277 285', 'g 283 308 289 299', 'r 289 315 295 309', 'r 290 315 297 303',
    'r 281 307 294 294', 'r 269 293 269 292', 'g 244 277 253 276', 'g 276 313 278 307', 'g 308 330 316 327',
    'g 327 347 327 345', 'g 327 346 338 341', 'r 323 355 326 343', 'r 224 326 224 326', 'g 215 257 222 233',
    'r 188 243 231 243', 'r 200 232 219 222', 'g 216 242 216 227', 'g 166 251 190 250', 'g 229 272 235 272',
    'r 221 283 269 276', 'r 238 273 247 272', 'r 227 276 238 264', 'r 227 257 239 247', 'r 224 242 236 237',
    'r 214 237 217 237', 'g 220 237 220 227', 'g 218 243 230 235', 'g 236 253 237 243', 'g 243 262 249 249',
    'g 236 256 247 253', 'r 226 260 229 252', 'r 183 222 208 214', 'r 190 222 200 200', 'g 207 222 207 217',
    'r 215 258 227 237', 'g 221 243 222 228', 'g 227 273 227 266', 'g 263 292 263 291', 'g 291 313 295 307',
    'r 300 322 308 314', 'r 298 317 298 298', 'g 300 322 300 317', 'g 304 317 316 316', 'r 303 334 303 318',
    'r 269 307 296 301', 'g 295 315 295 309', 'g 310 319 310 314', 'r 313 322 318 318', 'r 309 324 314 319',
    'g 308 325 309 319', 'g 322 336 325 330', 'r 326 339 333 333', 'r 322 333 324 333', 'g 322 349 323 349',
    'r 336 355 336 342', 'g 331 356 335 347', 'g 349 364 349 363', 'r 320 363 341 361', 'g 337 364 349 363',
    'g 360 389 372 388', 'r 374 402 379 382', 'g 367 398 382 398', 'g 393 401 393 401', 'g 397 421 400 418',
    'g 363 418 363 418', 'r 385 425 389 418', 'g 371 393 384 384', 'g 377 406 386 391', 'r 385 399 389 392',
    'r 375 389 376 388', 'r 368 382 372 376', 'r 356 381 358 372', 'g 359 382 362 378', 'r 367 387 371 387',
    'r 360 381 365 365', 'r 366 375 373 373', 'g 373 395 374 387', 'g 381 396 381 395', 'g 393 406 393 406',
    'r 375 413 386 411', 'g 378 405 388 405', 'g 399 412 405 408', 'g 404 415 411 415'
];

// volume bar tops, same order as the candles
const volumes = [
    482, 487, 479, 460, 470, 488, 493, 494, 495, 501, 498, 497, 497, 501, 498, 503, 502, 502, 504, 505,
    504, 504, 500, 504, 503, 505, 502, 503, 504, 505, 502, 498, 504, 505, 505, 505, 502, 499, 503, 506,
    501, 503, 501, 502, 506, 505, 506, 499, 499, 504, 504, 503, 503, 503, 501, 497, 503, 497, 503, 470,
    462, 488, 453, 468, 477, 486, 492, 488, 492, 498, 495, 496, 500, 502, 502, 501, 494, 492, 498, 500,
    501, 504, 502, 462, 449, 463, 477, 486, 457, 481, 487, 489, 487, 490, 492, 486, 493, 496, 499, 500,
    500, 497, 473, 486, 496, 495, 500, 495, 497, 500, 504, 503, 502, 503, 503, 498, 502, 506, 504, 503,
    504, 504, 506, 506, 505, 506, 506, 505, 499, 501, 503, 505, 504, 504, 504, 504, 504, 505, 506, 506,
    505, 506, 504, 506, 506, 506, 506, 506, 506, 506, 505, 507, 507, 507
];

const STEP = 5.276;

function px(i) {
    return Math.round(55 + i * STEP);
}

function drawCandles() {
    candles.forEach(function (row, i) {
        const p = row.split(' ');
        const hi = +p[1], lo = +p[2], top = +p[3], bot = +p[4];
        const x = px(i);
        const isGreen = p[0] === 'g';
        line('candles', x + 0.5, hi, x + 0.5, lo, isGreen ? GREEN_WICK : RED_WICK);
        if (bot - top < 2) {
            line('candles', x - 2, top + 0.5, x + 3, top + 0.5, isGreen ? GREEN : RED);
        } else if (isGreen) {
            add('candles', 'rect', { x: x - 2, y: top, width: 5, height: bot - top, fill: GREEN });
        } else {
            add('candles', 'rect', { x: x - 1.5, y: top + 0.5, width: 4, height: bot - top - 1, fill: '#fff', stroke: RED });
        }
    });
}

function drawVolumes() {
    volumes.forEach(function (top, i) {
        const x = px(i);
        const isGreen = candles[i][0] === 'g';
        if (isGreen) {
            add('volumes', 'rect', { x: x - 2, y: top, width: 5, height: 510 - top, fill: GREEN });
        } else {
            add('volumes', 'rect', { x: x - 1.5, y: top + 0.5, width: 4, height: 510 - top - 1, fill: '#fff', stroke: RED });
        }
    });
}

function drawAxis() {
    const dates = [
        [62, '02-10'], [107, '02-24'], [159, '03-10'], [212, '03-24'], [264, '04-10'], [317, '04-24'], [369, '05-11'],
        [423, '05-25'], [476, '06-08'], [529, '06-26'], [581, '07-10'], [634, '07-24'], [687, '08-07'], [739, '08-21'],
        [792, '09-04'], [844, '09-18'], [897, '10-02'], [949, '10-16'], [1002, '10-30']
    ];
    dates.forEach(function (d) {
        add('axis', 'text', { x: d[0], y: 97, class: 'date' }, d[1]);
    });
    line('axis', 0, 99.5, 1024, 99.5, '#c4c4c4');
    line('axis', 0, 510.5, 1024, 510.5, '#a8a8a8');

    [449.5, 464.5, 479.5, 494.5].forEach(function (y) {
        line('axis', 53, y, 1024, y, '#c8c8c8', '2 2');
    });
    [[449, '11.6000'], [467, '159882'], [482, '106588'], [498, '53294']].forEach(function (s) {
        add('axis', 'text', { x: 52, y: s[0], class: 'scale' }, s[1]);
    });
    add('axis', 'path', { d: 'M827 110H834L830.500 114Z', fill: '#111' });
}

function drawLevels() {
    // Gann date markers on the right
    [[931.5, '#9cc4dc', 931, '10-10'], [968.5, '#e09098', 968, '10-19'], [1005.5, '#9cc4dc', 1005, '10-30']].forEach(function (m) {
        line('levels', m[0], 124, m[0], 450, m[1], '2 2');
        add('levels', 'text', { x: m[2] - 12, y: 121, class: 'hi' }, m[3]);
    });

    line('levels', 172, 221.5, 1024, 221.5, '#e0505c', '2 1');
    line('levels', 447, 236.5, 1024, 236.5, '#e0606c', '2 1');
    line('levels', 757, 307.5, 1024, 307.5, '#e0505c', '2 1');
    line('levels', 865, 415.5, 1024, 415.5, '#a0a0a0', '3 2');

    line('levels', 172, 263.5, 198, 263.5, '#6aaa74', '3 2');
    line('levels', 172, 352.5, 197, 352.5, '#444', '3 2');
    line('levels', 447, 275.5, 472, 275.5, '#6aaa74', '3 2');
    line('levels', 447, 315.5, 470, 315.5, '#444', '3 2');
    line('levels', 757, 331.5, 782, 331.5, '#444', '3 2');
    line('levels', 757, 410.5, 782, 410.5, '#444', '3 2');

    [[119.5, 221.5, 53, 131], [404.5, 236.5, 42, 79], [678.5, 307.5, 79, 102]].forEach(function (b) {
        add('levels', 'rect', { x: b[0], y: b[1], width: b[2], height: b[3], fill: 'none', stroke: '#6aa874' });
    });

    add('levels', 'text', { x: 167, y: 218, class: 'hi' }, '14.56');
    add('levels', 'text', { x: 442, y: 233, class: 'hi' }, '14.38');
    add('levels', 'text', { x: 753, y: 304, class: 'hi' }, '13.45');
    add('levels', 'text', { x: 167, y: 361, class: 'lo' }, '12.85');
    add('levels', 'text', { x: 442, y: 325, class: 'lo' }, '13.33');
    add('levels', 'text', { x: 752, y: 418, class: 'lo' }, '12.41');
}

function drawLabels() {
    add('labels', 'path', { d: 'M72 113 86 117', stroke: '#3c3cb0', fill: 'none' });
    add('labels', 'text', { x: 87, y: 125, class: 'peak' }, '15.9700');
    add('labels', 'path', { d: 'M324 449 334 447 339 445', stroke: '#3c3cb0', fill: 'none' });
    add('labels', 'text', { x: 339, y: 448, class: 'peak' }, '11.6000');
}

drawAxis();
drawLevels();
drawCandles();
drawVolumes();
drawLabels();
```
